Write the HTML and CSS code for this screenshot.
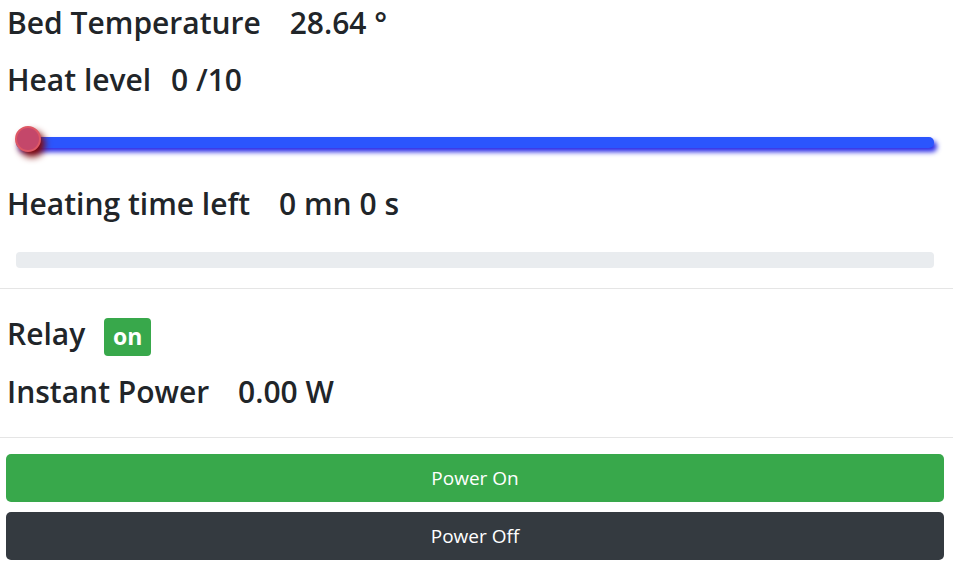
FILE: index.html
```html
<!DOCTYPE html>
<html lang="en">

<head>
  <meta charset="UTF-8">
  <meta name="viewport" content="width=device-width, initial-scale=1.0">
  <title>Heated bed</title>
  <link rel="stylesheet" href="styles.css">
</head>

<body>
  <div class="section section-top">
    <div class="line line-temp">
      <span class="label">Bed Temperature</span>
      <span class="value wide">28.64 °</span>
    </div>
    <div class="line line-level">
      <span class="label">Heat level</span>
      <span class="value narrow">0 /10</span>
    </div>

    <div class="slider">
      <div class="slider-track"></div>
      <div class="slider-thumb"></div>
    </div>

    <div class="line line-time">
      <span class="label">Heating time left</span>
      <span class="value wide">0 mn 0 s</span>
    </div>

    <div class="progress">
      <div class="progress-bar" style="width: 0%;"></div>
    </div>
  </div>

  <hr class="divider divider-first">

  <div class="section">
    <div class="line line-relay">
      <span class="label">Relay</span>
      <span class="badge">on</span>
    </div>
    <div class="line line-power">
      <span class="label">Instant Power</span>
      <span class="value wide">0.00 W</span>
    </div>
  </div>

  <hr class="divider divider-second">

  <div class="section">
    <button class="btn btn-on">Power On</button>
    <button class="btn btn-off">Power Off</button>
  </div>
</body>

</html>
```

FILE: styles.css
```css
html,
body {
  margin: 0;
  padding: 0;
  background: #FFF;
  color: #212529;
  font-family: "Open Sans", "Noto Sans", sans-serif;
}

* {
  box-sizing: border-box;
}

.section {
  padding: 0 9px 0 6px;
}

.section-top {
  padding-top: 1px;
}

.line {
  height: 44px;
  line-height: 44px;
  font-size: 30px;
  font-weight: 600;
  white-space: nowrap;
  padding-left: 1px;
}

.line-level {
  margin-top: 13px;
}

.line-time {
  margin-top: 34px;
}

.line-relay {
  margin-top: 23px;
}

.line-power {
  margin-top: 14px;
}

.value.wide {
  margin-left: 21px;
}

.value.narrow {
  margin-left: 12px;
}

.badge {
  display: inline-block;
  vertical-align: 0;
  margin-left: 11px;
  padding: 7px 9px 8px;
  font-size: 23px;
  font-weight: 700;
  line-height: 1;
  color: #FFF;
  background-color: #38a84b;
  border-radius: 4px;
}

.slider {
  position: relative;
  margin: 35px 10px 0;
  height: 11px;
}

.slider-track {
  height: 100%;
  background: #2b55fd;
  border-radius: 5px;
  box-shadow: 3px 4px 5px #2c2ce6;
}

.slider-thumb {
  position: absolute;
  left: -1px;
  top: -11px;
  width: 26px;
  height: 26px;
  border-radius: 50%;
  background: #c4476a;
  border: 2px solid #de5865;
  box-shadow: 4px 5px 7px #800808;
}

.progress {
  margin: 26px 10px 0;
  height: 16px;
  background-color: #e9ecef;
  border-radius: 4px;
  overflow: hidden;
}

.progress-bar {
  height: 100%;
  background: #007bff;
}

.divider {
  margin: 0;
  border: 0;
  height: 1px;
  background: #e5e5e5;
}

.divider-first {
  margin-top: 20px;
}

.divider-second {
  margin-top: 23px;
}

.btn {
  display: block;
  width: 100%;
  height: 48px;
  margin: 16px 0 0;
  padding: 0 16px;
  font-family: "Open Sans", "Noto Sans", sans-serif;
  font-size: 19px;
  color: #FFF;
  border: 0;
  border-radius: 5px;
  cursor: pointer;
}

.btn-on {
  background-color: #38a84b;
}

.btn-off {
  margin-top: 10px;
  background-color: #343a40;
}
```
